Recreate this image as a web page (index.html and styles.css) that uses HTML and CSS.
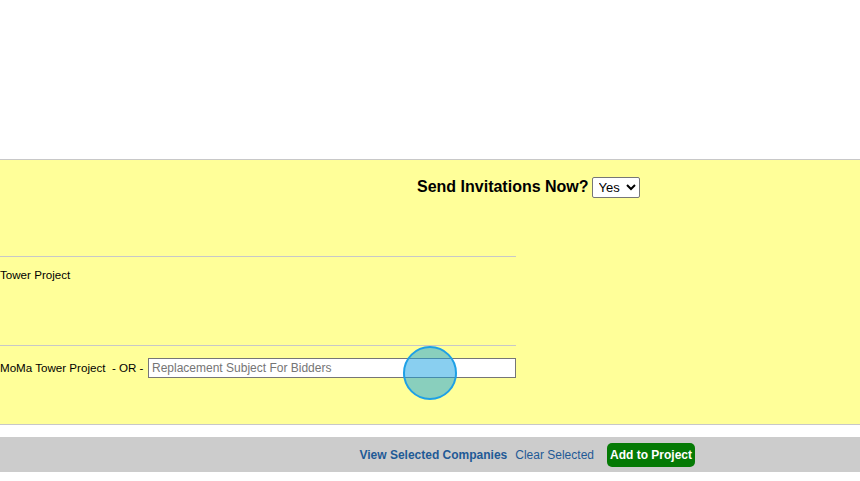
FILE: index.html
```html
<!DOCTYPE html>
<html>
<head>
<meta charset="utf-8">
<link rel="stylesheet" href="styles.css">
</head>
<body>
<div class="top-space"></div>
<div class="panel">
  <div class="invite">
    <span class="invite-label">Send Invitations Now?</span>
    <select class="invite-select"><option>Yes</option><option>No</option></select>
  </div>
  <div class="rows">
    <div class="row row-project">Tower Project</div>
    <div class="row row-subject">
      <span class="subject-text">MoMa Tower Project&nbsp; - OR - </span>
      <input class="subject-input" type="text" placeholder="Replacement Subject For Bidders">
    </div>
  </div>
</div>
<div class="actions">
  <a class="link link-bold" href="#">View Selected Companies</a>
  <a class="link" href="#">Clear Selected</a>
  <button class="add-btn">Add to Project</button>
</div>
<div class="click-marker"></div>
</body>
</html>
```
FILE: styles.css
```css
html, body {
  margin: 0;
  padding: 0;
  background: #ffffff;
  font-family: "Liberation Sans", Arial, sans-serif;
  font-size: 12px;
  color: #000;
}
body {
  position: relative;
  width: 860px;
  height: 481px;
  overflow: hidden;
}
.top-space {
  height: 159px;
}
.panel {
  background: #ffff99;
  border-top: 1px solid #c8c8c8;
  border-bottom: 1px solid #c8c8c8;
}
.invite {
  height: 96px;
  box-sizing: border-box;
  padding: 17px 0 0 417px;
  display: flex;
  align-items: flex-start;
  gap: 3px;
}
.invite-label {
  font-size: 16px;
  font-weight: bold;
  line-height: 20px;
}
.invite-select {
  font-family: "Liberation Sans", Arial, sans-serif;
  font-size: 13px;
  height: 21px;
  width: 48px;
  padding: 0 0 0 2px;
  border: 1px solid #767676;
  border-radius: 2px;
  background: #fff;
  color: #000;
}
.rows {
  width: 516px;
}
.row {
  border-top: 1px solid #c8c8c8;
  box-sizing: border-box;
  font-size: 11.6px;
}
.row-project {
  height: 89px;
  padding-top: 11px;
  line-height: 14px;
}
.row-subject {
  height: 79px;
  padding-top: 12px;
  display: flex;
  align-items: flex-start;
}
.subject-text {
  line-height: 20px;
  white-space: pre;
  width: 148px;
  flex: none;
}
.subject-input {
  flex: 1;
  height: 20px;
  box-sizing: border-box;
  margin: 0;
  padding: 0 3px;
  border: 1px solid #767676;
  border-radius: 0;
  font-family: "Liberation Sans", Arial, sans-serif;
  font-size: 12px;
  background: #fff;
}
.subject-input::placeholder {
  color: #757575;
}
.actions {
  margin-top: 12px;
  height: 35px;
  background: #cccccc;
  display: flex;
  align-items: center;
  justify-content: flex-end;
  padding-right: 165px;
}
.link {
  color: #1f5a96;
  text-decoration: none;
  font-size: 12px;
}
.link-bold {
  font-weight: bold;
  margin-right: 8px;
}
.add-btn {
  margin-left: 13px;
  background: #057a05;
  color: #fff;
  border: none;
  border-radius: 5px;
  font-family: "Liberation Sans", Arial, sans-serif;
  font-size: 12px;
  font-weight: bold;
  line-height: 14px;
  padding: 5px 3px;
  height: 24px;
  white-space: nowrap;
}
.click-marker {
  position: absolute;
  left: 403px;
  top: 346px;
  width: 50px;
  height: 50px;
  border-radius: 50%;
  border: 2px solid #1ea0e6;
  background: rgba(20, 159, 225, 0.5);
}
```
